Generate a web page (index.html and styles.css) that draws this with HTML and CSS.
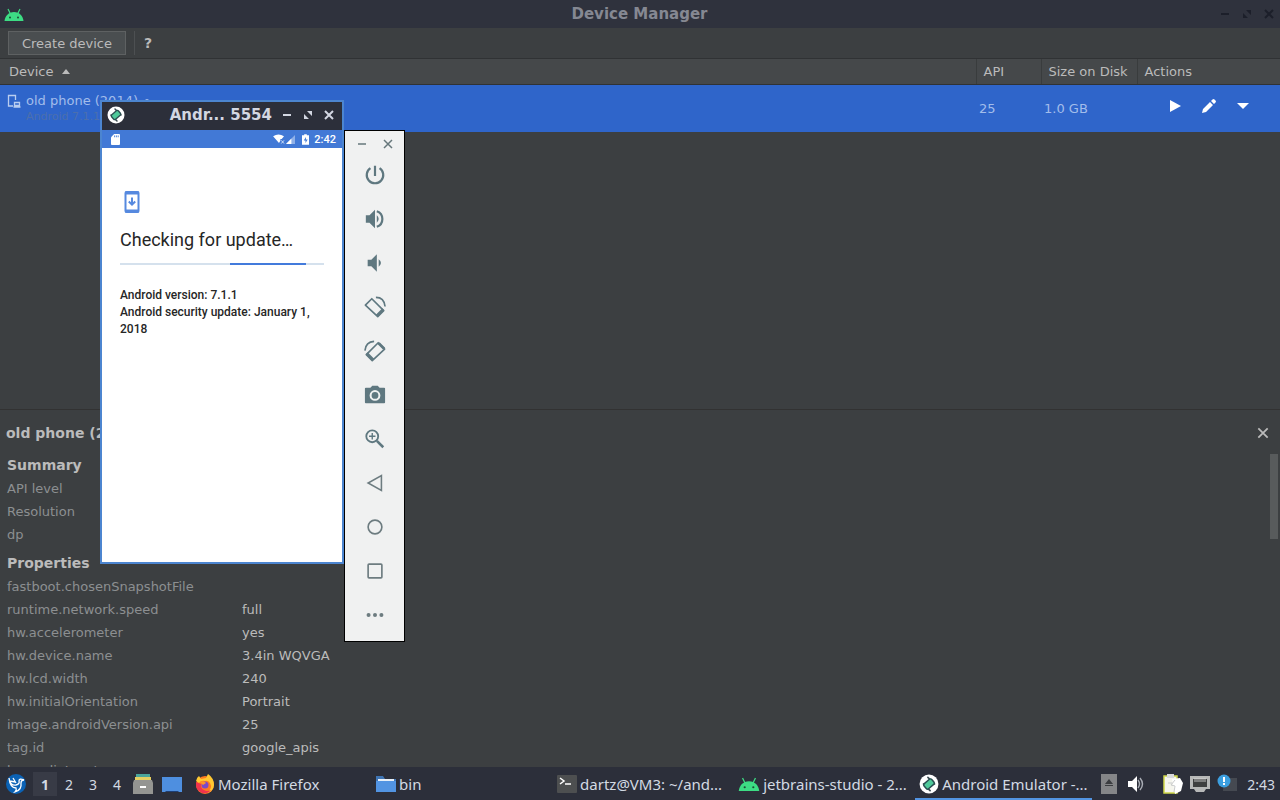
FILE: index.html
```
<!DOCTYPE html>
<html lang="en">
<head>
  <meta charset="UTF-8">
  <title>Device Manager</title>
  <meta name="viewport" content="width=device-width, initial-scale=1">
  <link rel="stylesheet" href="styles.css">
</head>
<body>
  <!-- Shared icons -->
  <svg class="sprite" aria-hidden="true">
    <symbol id="android" viewBox="0 0 20 13">
      <path d="M0.500 13C1 8 4.500 4 10 4S19 8 19.500 13z" fill="#3ddc84"/>
      <path d="M4 1l2.500 5M16 1l-2.500 5" stroke="#3ddc84" stroke-width="1.200"/>
      <circle cx="6" cy="9.500" r="1" fill="#1d4a35"/><circle cx="14" cy="9.500" r="1" fill="#1d4a35"/>
    </symbol>
    <symbol id="emulator" viewBox="0 0 18 18">
      <circle cx="9" cy="9" r="8.500" fill="#fff"/>
      <path d="M4 9l6 6M8 3l6 6" stroke="#3b4a50" stroke-width="1.500" stroke-linecap="round"/>
      <rect x="6" y="4.500" width="6" height="9" rx="1.500" transform="rotate(50 9 9)" fill="#4fc99a" stroke="#2a4d50" stroke-width="1.300"/>
    </symbol>
    <symbol id="cross" viewBox="0 0 12 12">
      <path d="M2 2l8 8M10 2l-8 8" stroke="currentColor"/>
    </symbol>
    <symbol id="minus" viewBox="0 0 12 12">
      <path d="M2 6h8" stroke="currentColor"/>
    </symbol>
    <symbol id="expand" viewBox="0 0 12 12">
      <path d="M5 2h5v5zM2 5v5h5z" fill="currentColor"/>
    </symbol>
  </svg>

  <main class="manager">
    <header class="titlebar">
      <svg class="title-logo"><use href="#android"/></svg>
      <h1>Device Manager</h1>
      <div class="window-buttons">
        <button aria-label="Minimize"><svg><use href="#minus"/></svg></button>
        <button aria-label="Maximize"><svg class="thin"><use href="#expand"/></svg></button>
        <button aria-label="Close"><svg><use href="#cross"/></svg></button>
      </div>
    </header>

    <div class="toolbar">
      <button class="create-btn">Create device</button>
      <button class="help-btn">?</button>
    </div>

    <div class="devices">
      <table class="device-table">
        <thead>
          <tr>
            <th>Device <svg class="sort" viewBox="0 0 8 5"><path d="M0 5l4-5 4 5z"/></svg></th>
            <th class="col-api">API</th>
            <th class="col-size">Size on Disk</th>
            <th class="col-actions">Actions</th>
          </tr>
        </thead>
        <tbody>
          <tr>
            <td>
              <div class="device">
                <svg class="device-icon" viewBox="0 0 14 14" fill="none" stroke="#b9cdf0" stroke-width="1.300">
                  <path d="M6 12H1.500V1.500H8.500V6"/><path d="M7.500 8.500h5v3h-5zM6.500 13h7"/>
                </svg>
                <div>
                  <div class="device-name">old phone (2014) <span class="dot"></span></div>
                  <div class="device-sub">Android 7.1.1</div>
                </div>
              </div>
            </td>
            <td>25</td>
            <td>1.0 GB</td>
            <td>
              <div class="actions">
                <button aria-label="Launch"><svg viewBox="0 0 16 16"><path d="M3 2l11 6-11 6z"/></svg></button>
                <button aria-label="Edit"><svg viewBox="0 0 16 16"><path d="M1 15l1-4 7-7 3 3-7 7zM10 3l1.500-1.500q1-1 2 0l1 1q1 1 0 2L13 6z"/></svg></button>
                <button aria-label="More"><svg viewBox="0 0 16 16"><path d="M2 5h12l-6 6z"/></svg></button>
              </div>
            </td>
          </tr>
        </tbody>
      </table>
    </div>

    <section class="details">
      <div class="details-head">
        <h2>old phone (2014)</h2>
        <button class="close-btn" aria-label="Close details"><svg><use href="#cross"/></svg></button>
      </div>
      <div class="details-body">
        <h3>Summary</h3>
        <table class="props">
          <tr><th>API level</th><td></td></tr>
          <tr><th>Resolution</th><td></td></tr>
          <tr><th>dp</th><td></td></tr>
        </table>
        <h3>Properties</h3>
        <table class="props">
          <tr><th>fastboot.chosenSnapshotFile</th><td></td></tr>
          <tr><th>runtime.network.speed</th><td>full</td></tr>
          <tr><th>hw.accelerometer</th><td>yes</td></tr>
          <tr><th>hw.device.name</th><td>3.4in WQVGA</td></tr>
          <tr><th>hw.lcd.width</th><td>240</td></tr>
          <tr><th>hw.initialOrientation</th><td>Portrait</td></tr>
          <tr><th>image.androidVersion.api</th><td>25</td></tr>
          <tr><th>tag.id</th><td>google_apis</td></tr>
          <tr><th>hw.audioInput</th><td></td></tr>
        </table>
        <div class="scroll-thumb"></div>
      </div>
    </section>
  </main>

  <!-- Emulator window -->
  <section class="emulator">
    <header class="emu-title">
      <svg class="emu-logo"><use href="#emulator"/></svg>
      <h2>Andr... 5554</h2>
      <div class="emu-buttons">
        <button aria-label="Minimize"><svg><use href="#minus"/></svg></button>
        <button aria-label="Maximize"><svg><use href="#expand"/></svg></button>
        <button aria-label="Close"><svg><use href="#cross"/></svg></button>
      </div>
    </header>
    <div class="statusbar">
      <svg class="sd" viewBox="0 0 10 12" fill="#fff"><path d="M3.500 0H9q1 0 1 1v10q0 1-1 1H1q-1 0-1-1V3.500z"/><path d="M4 1.500v2M6 1.500v2M8 1.500v2" stroke="#437bd6"/></svg>
      <svg class="wifi" viewBox="0 0 13 11" fill="#fff"><path d="M0 2.500Q6 -1.500 12 2.500L9.500 5.500H8v2L6.500 10z"/><path d="M9 7l3 3.500M12 7l-3 3.500" stroke="#dce8fb"/></svg>
      <svg class="signal" viewBox="0 0 10 10"><path d="M10 0v10H0z" fill="#8fb0e8"/><path d="M6 4v6H0z" fill="#fff"/></svg>
      <svg class="battery" viewBox="0 0 8 12"><path d="M2.500 0h3v1H8v11H0V1h2.500z" fill="#fff"/><path d="M4.500 3L2 7h2v3l2.500-4h-2z" fill="#437bd6"/></svg>
      <span>2:42</span>
    </div>
    <div class="screen">
      <svg class="update-icon" viewBox="0 0 16 24" fill="none" stroke="#5689df" stroke-width="2">
        <rect x="1.500" y="2" width="13" height="20" rx="1"/>
        <path d="M1 3h14M1 21h14" stroke-width="3"/>
        <path d="M8 7.500v7M4.800 11.500L8 14.700l3.200-3.200"/>
      </svg>
      <h3>Checking for update…</h3>
      <div class="progress"><div class="progress-bar"></div></div>
      <p>Android version: 7.1.1<br>Android security update: January 1, 2018</p>
    </div>
  </section>

  <!-- Emulator side controls -->
  <aside class="controls">
    <div class="controls-top">
      <button aria-label="Minimize"><svg><use href="#minus"/></svg></button>
      <button aria-label="Close"><svg><use href="#cross"/></svg></button>
    </div>
    <button aria-label="Power"><svg viewBox="0 0 24 24" fill="none" stroke="#5f7880" stroke-width="2.400"><path d="M12 2v11M7 4.500a9 9 0 1 0 10 0"/></svg></button>
    <button aria-label="Volume up"><svg viewBox="0 0 24 24" fill="#5f7880"><path d="M2 8h4l6-6v20l-6-6H2z"/><path d="M14 8q4 4 0 8z"/><path d="M14 3.500a9 9 0 0 1 0 17" fill="none" stroke="#5f7880" stroke-width="2.400"/></svg></button>
    <button aria-label="Volume down"><svg viewBox="0 0 24 24" fill="#5f7880"><path d="M4 8.500h4l6-6v19l-6-6H4z"/><path d="M16 8q5 4 0 8z"/></svg></button>
    <button aria-label="Rotate left">
      <svg viewBox="0 0 24 24" fill="none" stroke="#5f7880" stroke-width="1.800"><path d="M8.500 3L21.500 16 15 22.500 1.500 10z" stroke-linejoin="round"/><path d="M14 21.500l7-7" stroke-width="3"/><path d="M13 1.500q9 0 10 10"/></svg>
    </button>
    <button aria-label="Rotate right">
      <svg viewBox="0 0 24 24" fill="none" stroke="#5f7880" stroke-width="1.800"><path d="M15.500 3L2.500 16 9 22.500 22.500 10z" stroke-linejoin="round"/><path d="M10 21.500l-7-7M22 9.500l-6-6" stroke-width="3"/><path d="M11 1.500Q2 2 1 11.500"/></svg>
    </button>
    <button aria-label="Screenshot"><svg viewBox="0 0 24 24"><path d="M2 4h5l2-2h6l2 2h5q1 0 1 1v15q0 1-1 1H2q-1 0-1-1V5q0-1 1-1z" fill="#5f7880"/><circle cx="12" cy="12.500" r="4.800" fill="none" stroke="#f0f1f1" stroke-width="2.200"/></svg></button>
    <button aria-label="Zoom"><svg viewBox="0 0 24 24" fill="none" stroke="#5f7880" stroke-width="2"><circle cx="9" cy="9" r="6.500"/><path d="M9 5.500v7M5.500 9h7" stroke-width="1.500"/><path d="M14 14l7 7" stroke-width="2.800"/></svg></button>
    <button aria-label="Back"><svg viewBox="0 0 24 24" fill="none" stroke="#6d7c80" stroke-width="1.700"><path d="M19 4v16L4.500 12z"/></svg></button>
    <button aria-label="Home"><svg viewBox="0 0 24 24" fill="none" stroke="#6d7c80" stroke-width="1.800"><circle cx="12" cy="12" r="7.500"/></svg></button>
    <button aria-label="Overview"><svg viewBox="0 0 24 24" fill="none" stroke="#6d7c80" stroke-width="1.800"><rect x="4.500" y="4.500" width="15" height="15" rx="1"/></svg></button>
    <button aria-label="More"><svg viewBox="0 0 24 24" fill="#6d7c80"><circle cx="5" cy="12" r="2.200"/><circle cx="12" cy="12" r="2.200"/><circle cx="19" cy="12" r="2.200"/></svg></button>
  </aside>

  <footer class="taskbar">
    <button class="launcher" aria-label="Menu">
      <svg viewBox="0 0 20 20"><circle cx="10" cy="10" r="10" fill="#0b62b5"/><path d="M3 4q1 8 7 7 4-1 3-4 0-3 5-1-3 0-3 3 1 7-6 9 2-2 1-4-6 0-7-10zM4 7l5 1M7 4l3 5" fill="none" stroke="#fff" stroke-width="1.300"/></svg>
    </button>
    <nav class="workspaces">
      <button class="current">1</button>
      <button>2</button>
      <button>3</button>
      <button>4</button>
    </nav>
    <button class="quick" aria-label="Files">
      <svg viewBox="0 0 20 20"><path d="M3 0h14v4H3z" fill="#4aa59b"/><path d="M2 3h16v4H2z" fill="#e5cf62"/><path d="M1 6h18l1 3v11H0V9z" fill="#949592"/><path d="M7 12h6v2H7z" fill="#fff"/></svg>
    </button>
    <button class="quick" aria-label="Show desktop">
      <svg viewBox="0 0 20 20"><path d="M0 3h20v15h-3l-2-1H5l-2 1H0z" fill="#4e8fe0"/><path d="M3 18l2-1h10l2 1z" fill="#1e3f76"/></svg>
    </button>
    <div class="tasks">
      <button class="task">
        <svg viewBox="0 0 20 20"><circle cx="10" cy="11" r="9" fill="#ff7a20"/><path d="M1 7q1-4 3-5l2 3 5-1 2-4q6 4 6 11a9 9 0 0 1-7 8q6-5 3-10-2-3-5-2-4-1-6 2z" fill="#ffc832"/><path d="M1 8q-1 8 6 11 6 1 9-3-4 2-7 0-4-2-3-6z" fill="#f0344d"/><circle cx="10" cy="11" r="3.500" fill="#7b49c8"/><path d="M5 8q4-2 6 1l-3 2z" fill="#ff9428"/></svg>
        <span>Mozilla Firefox</span>
      </button>
      <button class="task">
        <svg viewBox="0 0 20 20"><path d="M0 2h7l2 3h11v13H0z" fill="#3f75b4"/><path d="M2 5h16v4H2z" fill="#e7eff8"/><path d="M0 7h20v11H0z" fill="#5294e2"/></svg>
        <span>bin</span>
      </button>
      <button class="task">
        <svg viewBox="0 0 20 20"><rect y="1" width="20" height="18" rx="1" fill="#4d4f50"/><path d="M3 4l4 3-4 3M8 10h6" fill="none" stroke="#fff" stroke-width="1.500"/></svg>
        <span>dartz@VM3: ~/and...</span>
      </button>
      <button class="task">
        <svg class="wide"><use href="#android"/></svg>
        <span>jetbrains-studio - 2...</span>
      </button>
      <button class="task active">
        <svg><use href="#emulator"/></svg>
        <span>Android Emulator -...</span>
      </button>
    </div>
    <div class="tray">
      <svg viewBox="0 0 20 20"><path d="M2 0h16v20H2z" fill="#858688"/><path d="M6 10l4-5 4 5zM6 11h8v1H6z" fill="#3b3d40"/></svg>
      <svg viewBox="0 0 20 20"><path d="M2 7h4l5-5v16l-5-5H2z" fill="#fff"/><path d="M12 6q3 4 0 8M14 4q5 6 0 12" fill="none" stroke="#a9adb5" stroke-width="1.400"/></svg>
      <svg class="clip" viewBox="0 0 20 20"><path d="M1 2h13v17H1z" fill="#f5f5ed" stroke="#d0d74a" stroke-width="1.500"/><path d="M4 0h7v4H4z" fill="#d9dadb"/><path d="M9 5l8-1 3 5-2 8-6 3z" fill="#fff"/><path d="M12 6l-4 5 4 1-1 6M9 9H5" fill="none" stroke="#c9cbcc"/></svg>
      <svg viewBox="0 0 20 20"><path d="M0 2h20v13h-4l-2 3H6l-2-3H0z" fill="#b7b8b8"/><path d="M3 5h14v8H3z" fill="#3e3f40"/><path d="M5 4v4M7 4v4M9 4v4M11 4v4M13 4v4M15 4v4" stroke="#ddd" stroke-width=".8"/></svg>
      <svg viewBox="0 0 20 20"><path d="M7 4h13v13H6z" fill="#454951"/><circle cx="7" cy="7" r="6.500" fill="#3c9fe0"/><path d="M7 3v5M7 9v2" stroke="#fff" stroke-width="2"/></svg>
      <time>2:43</time>
    </div>
  </footer>
</body>
</html>
```
FILE: styles.css
```
* {
  box-sizing: border-box;
}
body {
  margin: 0;
  height: 100vh;
  display: flex;
  flex-direction: column;
  overflow: hidden;
  background: #3c3f41;
  color: #bbb;
  font-family: "DejaVu Sans", sans-serif;
  font-size: 13px;
}
button {
  border: 0;
  padding: 0;
  background: none;
  color: inherit;
  font: inherit;
  cursor: pointer;
}
h1, h2, h3, p {
  margin: 0;
  font-size: 14px;
}
svg {
  display: block;
  flex: none;
}
.sprite {
  position: absolute;
  width: 0;
  height: 0;
}

/* Device manager */
.manager {
  flex: 1;
  min-height: 0;
  display: flex;
  flex-direction: column;
}
.titlebar {
  display: flex;
  align-items: center;
  height: 28px;
  padding: 0 5px 0 4px;
  background: #2f323d;
}
.title-logo {
  width: 20px;
  height: 13px;
}
.titlebar h1 {
  flex: 1;
  padding-left: 36px;
  text-align: center;
  color: #858892;
  font-size: 15px;
}
.window-buttons {
  display: flex;
  gap: 10px;
  color: #1c1f2a;
}
.window-buttons svg {
  width: 12px;
  height: 12px;
  stroke-width: 2;
}
.toolbar {
  display: flex;
  align-items: center;
  height: 30px;
  padding: 0 8px;
}
.create-btn {
  width: 118px;
  height: 24px;
  border: 1px solid #5e6162;
  background: #4a4e50;
}
.help-btn {
  height: 24px;
  margin-left: 8px;
  padding: 0 9px;
  border-left: 1px solid #4d5052;
  font-size: 14px;
  font-weight: bold;
}
.devices {
  height: 352px;
  border-bottom: 1px solid #323232;
}
.device-table {
  width: 100%;
  table-layout: fixed;
  border-collapse: collapse;
}
.device-table th {
  height: 26px;
  padding: 0 7px;
  border-top: 1px solid #303234;
  border-bottom: 1px solid #303234;
  background: #45484a;
  text-align: left;
  font-weight: normal;
  white-space: nowrap;
}
.device-table th:first-child {
  padding-left: 9px;
}
.device-table th + th {
  border-left: 1px solid #393c3d;
}
.device-table .col-api {
  width: 65px;
}
.device-table .col-size {
  width: 96px;
}
.device-table .col-actions {
  width: 143px;
}
.sort {
  display: inline-block;
  width: 8px;
  height: 5px;
  margin: 0 0 2px 4px;
  fill: #bbb;
}
.device-table td {
  height: 47px;
  padding: 0 3px;
  background: #2f65ca;
  color: #a3bdeb;
}
.device-table td:first-child {
  padding-left: 7px;
}
.device {
  display: flex;
  gap: 5px;
}
.device-icon {
  width: 14px;
  height: 14px;
  margin-top: 2px;
}
.device-name {
  line-height: 18px;
}
.dot {
  display: inline-block;
  width: 4px;
  height: 4px;
  margin: 0 0 2px 3px;
  border-radius: 50%;
  background: #a3bdeb;
}
.device-sub {
  color: #4b6fae;
  font-size: 11px;
  line-height: 14px;
}
.actions {
  display: flex;
  justify-content: flex-end;
  gap: 18px;
  padding: 0 26px 4px 0;
}
.actions svg {
  width: 16px;
  height: 16px;
  fill: #fff;
}
.details {
  flex: 1;
  min-height: 0;
  display: flex;
  flex-direction: column;
}
.details-head {
  display: flex;
  justify-content: space-between;
  align-items: center;
  height: 44px;
  padding: 2px 10px 0 6px;
}
.close-btn svg {
  width: 14px;
  height: 14px;
  stroke-width: 1.5;
}
.details-body {
  position: relative;
  flex: 1;
  overflow: hidden;
  padding: 0 7px;
}
.details-body h3 {
  line-height: 23px;
}
.props + h3 {
  margin-top: 6px;
}
.props {
  border-collapse: collapse;
}
.props th, .props td {
  height: 23px;
  padding: 0;
  text-align: left;
  line-height: 20px;
  font-weight: normal;
}
.props th {
  width: 235px;
  color: #8c8f91;
}
.scroll-thumb {
  position: absolute;
  top: 0;
  right: 2px;
  width: 8px;
  height: 85px;
  background: #585b5c;
}

/* Emulator */
.emulator {
  position: absolute;
  top: 100px;
  left: 100px;
  width: 244px;
  height: 464px;
  border: 2px solid #4c85d0;
  background: #fff;
  font-family: Roboto, sans-serif;
}
.emu-title {
  display: flex;
  align-items: center;
  height: 28px;
  padding: 0 7px 2px 5px;
  background: #2c2f3a;
  color: #d3d7e2;
}
.emu-logo {
  width: 18px;
  height: 18px;
}
.emu-title h2 {
  flex: 1;
  padding-right: 9px;
  text-align: right;
  font-family: "DejaVu Sans", sans-serif;
  font-size: 15px;
}
.emu-buttons {
  display: flex;
  gap: 9px;
}
.emu-buttons svg {
  width: 12px;
  height: 12px;
  stroke-width: 2;
}
.statusbar {
  display: flex;
  align-items: center;
  height: 18px;
  padding: 0 6px 0 9px;
  background: #4279d6;
  color: #fff;
  font-size: 11px;
  font-weight: 500;
}
.sd {
  width: 9px;
  height: 11px;
  margin-right: auto;
}
.wifi {
  width: 12px;
  height: 10px;
}
.signal {
  width: 9px;
  height: 9px;
  margin: 0 7px 0 1px;
}
.battery {
  width: 7px;
  height: 11px;
  margin-right: 5px;
}
.screen {
  padding: 42px 18px 0;
  color: #262626;
}
.update-icon {
  width: 16px;
  height: 24px;
  margin-left: 4px;
}
.screen h3 {
  margin-top: 14px;
  font-size: 18px;
  font-weight: normal;
  line-height: 24px;
}
.progress {
  display: flex;
  height: 2px;
  margin: 11px 0 22px;
  background: #d5e1ed;
}
.progress-bar {
  width: 37%;
  margin-left: 54%;
  background: #437bdc;
}
.screen p {
  font-size: 12px;
  font-weight: 500;
  line-height: 17px;
}
.controls {
  position: absolute;
  top: 130px;
  left: 344px;
  display: flex;
  flex-direction: column;
  align-items: center;
  width: 61px;
  height: 512px;
  border: 1px solid #000;
  background: #f0f1f1;
}
.controls-top {
  display: flex;
  gap: 14px;
  padding: 7px 0 3px;
  color: #66777b;
}
.controls-top svg {
  width: 12px;
  height: 12px;
  stroke-width: 1.5;
}
.controls > button {
  display: grid;
  place-items: center;
  height: 44px;
}
.controls > button svg {
  width: 22px;
  height: 22px;
}

/* Taskbar */
.taskbar {
  display: flex;
  align-items: center;
  height: 33px;
  padding: 1px 5px 0 6px;
  background: #2c2f3a;
  color: #d3dae3;
  font-family: "Noto Sans", sans-serif;
  font-size: 14px;
}
.taskbar svg {
  width: 20px;
  height: 20px;
}
.workspaces {
  display: flex;
  margin: 0 4px 0 7px;
}
.workspaces button {
  width: 24px;
  height: 24px;
}
.workspaces .current {
  background: #383b46;
  font-weight: bold;
}
.quick {
  margin-right: 9px;
}
.tasks {
  flex: 1;
  min-width: 0;
  display: grid;
  grid-template-columns: repeat(5, 1fr);
  align-self: stretch;
  gap: 4px;
}
.task {
  display: flex;
  align-items: center;
  gap: 3px;
  min-width: 0;
  padding: 2px 4px 0;
  white-space: nowrap;
  border-bottom: 2px solid transparent;
  font-size: 15px;
}
.task.active {
  border-color: #5294e2;
}
.task .wide {
  width: 22px;
  height: 14px;
}
.tray {
  display: flex;
  align-items: center;
  gap: 7px;
  padding-left: 7px;
}
.tray .clip {
  margin-left: 10px;
}
.tray time {
  margin-left: 3px;
}
```
